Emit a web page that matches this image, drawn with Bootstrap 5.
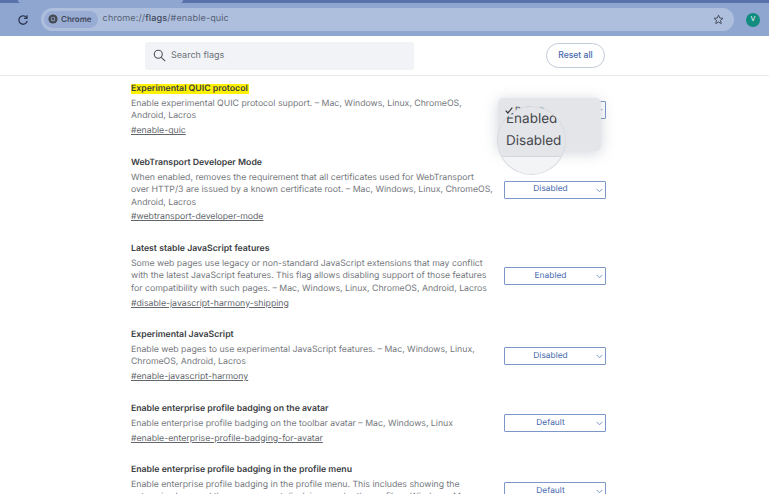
<!DOCTYPE html>
<html lang="en">
<head>
  <meta charset="UTF-8" />
  <meta name="viewport" content="width=device-width, initial-scale=1.0"/>
  <title>chrome://flags</title>
  <link href="https://cdn.jsdelivr.net/npm/bootstrap@5.3.3/dist/css/bootstrap.min.css" rel="stylesheet">
  <style>
    html, body { height: 100%; overflow: hidden; }
    body { background: #fff; font-family: Inter, "Liberation Sans", sans-serif; color: #75787d; position: relative; text-rendering: geometricPrecision; }

    .tab-strip { height: 3px; background: #5873ab; }
    .tab-active { width: 165px; margin-left: 18px; height: 3px; background: #8fa6d1; border-radius: 0 0 4px 4px; }
    .tool-bar { height: 33px; background: #8fa6d1; padding-left: 17px; }
    .reload-ico { width: 12px; height: 12px; margin-right: 12px; flex: none; }
    .omni-box { width: 693px; height: 23px; margin-top: -1px; background: #aebfde; border-radius: 12px; padding: 0 10px 0 3px; }
    .site-chip { height: 17px; padding: 0 6px 0 4px; background: #99add4; border-radius: 9px; font-size: 8px; font-weight: 600; color: #3f4759; gap: 3px; }
    .omni-url { font-size: 9.1px; color: #565f74; margin-left: 5px; letter-spacing: .1px; }
    .omni-url b { font-weight: 500; color: #3f4759; }
    .avatar-dot { width: 14px; height: 14px; border-radius: 50%; background: #128c7e; color: #fff; font-size: 7px; margin-left: 12px; }

    .flags-head { height: 40px; border-bottom: 1px solid #e9eaee; padding-left: 145px; padding-right: 164px; }
    .search-box { width: 269px; height: 28px; background: #f1f3f7; border-radius: 2px; padding-left: 8px; gap: 5px; font-size: 9px; color: #6a6e74; }
    .reset-btn { width: 59px; height: 25px; border: 1px solid #c3cad8; border-radius: 13px; background: #fff; color: #4668ae; font-size: 8.6px; font-weight: 500; padding: 0; }

    .flag-list { padding: 6px 164px 0 131px; }
    .flag-row { padding-bottom: 18px; gap: 10.5px; }
    .flag-text { width: 362.5px; flex: none; font-size: 8.72px; line-height: 12.4px; }
    .flag-title { font-weight: 600; color: #3a3d42; line-height: 15px; height: 16px; }
    .flag-title mark { background: #fff200; color: #3a3d42; padding: 0 1px 0 0; }
    .flag-desc { margin: 0; }
    .flag-link { display: block; color: #63666b; margin-top: 2.5px; }
    .flag-pick { width: 102px; height: 18px; flex: none; border: 1px solid #7d97c9; border-radius: 1px; background: #fff; color: #4668ae; font-size: 8.4px; padding-right: 9px; position: relative; }
    .pick-caret { position: absolute; right: 2px; top: 6px; }

    .pop-menu { position: absolute; left: 498px; top: 98px; width: 103px; height: 53px; background: #e4e5e9; border-radius: 5px; box-shadow: 0 2px 14px rgba(90, 100, 125, .28); font-size: 8.5px; color: #44474c; }
    .pop-check { position: absolute; left: 7px; top: 9px; }
    .pop-default { position: absolute; left: 17px; top: 8px; line-height: 10px; }
    .loupe { position: absolute; left: 498px; top: 107px; width: 67px; height: 67px; border-radius: 50%; background: #e4e5e9; overflow: hidden; box-shadow: 0 0 0 1px #d9dbe0; color: #44474c; font-size: 13.5px; line-height: 16px; text-align: center; }
    .loupe-one { position: absolute; left: 8px; top: 4px; }
    .loupe-two { position: absolute; left: 8px; top: 26px; }
    .loupe-foot { position: absolute; left: 0; right: 0; top: 49px; bottom: 0; background: #f3f4f6; border-top: 1px solid #d4d6db; }
  </style>
</head>
<body>

<div class="tab-strip"><div class="tab-active"></div></div>
<div class="tool-bar d-flex align-items-center">
  <svg class="reload-ico" viewBox="0 0 12 12" fill="none" stroke="#2f3a52" stroke-width="1.3"><path d="M9.8 4A4.2 4.2 0 1 0 10.2 7"/><path d="M10 1.3V4.3H7" /></svg>
  <div class="omni-box d-flex align-items-center">
    <span class="site-chip d-flex align-items-center">
      <svg width="10" height="10" viewBox="0 0 10 10"><circle cx="5" cy="5" r="4.6" fill="#454a55"/><circle cx="5" cy="5" r="2.2" fill="#99add4"/><circle cx="5" cy="5" r="1.4" fill="#454a55"/></svg>
      Chrome
    </span>
    <span class="omni-url">chrome://<b>flags</b>/#enable-quic</span>
    <svg class="ms-auto" width="11" height="11" viewBox="0 0 12 12" fill="none" stroke="#3f4656"><path d="M6 1.2 7.4 4.4 10.9 4.7 8.2 7 9 10.5 6 8.7 3 10.5 3.8 7 1.1 4.7 4.6 4.4Z"/></svg>
  </div>
  <span class="avatar-dot d-flex align-items-center justify-content-center">V</span>
</div>

<div class="flags-head d-flex align-items-center justify-content-between">
  <div class="search-box d-flex align-items-center">
    <svg width="13" height="13" viewBox="0 0 13 13" fill="none" stroke="#50545a" stroke-width="1.1"><circle cx="5.3" cy="5.3" r="4"/><path d="M8.3 8.3 12.2 12.2"/></svg>
    Search flags
  </div>
  <button class="reset-btn" type="button">Reset all</button>
</div>

<div class="flag-list" id="flagList"></div>

<div class="pop-menu">
  <svg class="pop-check" width="8" height="7" viewBox="0 0 8 7" fill="none" stroke="#33363b" stroke-width="1.2"><path d="M.7 3.6 2.9 6 7.3 .7"/></svg>
  <span class="pop-default">Default</span>
</div>
<div class="loupe">
  <span class="loupe-one">Enabled</span>
  <span class="loupe-two">Disabled</span>
  <div class="loupe-foot"></div>
</div>

<script>
  const flags = [
    { title: '<mark>Experimental QUIC protocol</mark>', desc: 'Enable experimental QUIC protocol support. – Mac, Windows, Linux, ChromeOS, Android, Lacros', link: '#enable-quic', val: 'Default' },
    { title: 'WebTransport Developer Mode', desc: 'When enabled, removes the requirement that all certificates used for WebTransport over HTTP/3 are issued by a known certificate root. – Mac, Windows, Linux, ChromeOS, Android, Lacros', link: '#webtransport-developer-mode', val: 'Disabled' },
    { title: 'Latest stable JavaScript features', desc: 'Some web pages use legacy or non-standard JavaScript extensions that may conflict with the latest JavaScript features. This flag allows disabling support of those features for compatibility with such pages. – Mac, Windows, Linux, ChromeOS, Android, Lacros', link: '#disable-javascript-harmony-shipping', val: 'Enabled' },
    { title: 'Experimental JavaScript', desc: 'Enable web pages to use experimental JavaScript features. – Mac, Windows, Linux, ChromeOS, Android, Lacros', link: '#enable-javascript-harmony', val: 'Disabled' },
    { title: 'Enable enterprise profile badging on the avatar', desc: 'Enable enterprise profile badging on the toolbar avatar – Mac, Windows, Linux', link: '#enable-enterprise-profile-badging-for-avatar', val: 'Default' },
    { title: 'Enable enterprise profile badging in the profile menu', desc: 'Enable enterprise profile badging in the profile menu. This includes showing the enterprise logo and the management disclaimer under the profile. – Windows, Mac', link: '#enable-enterprise-profile-badging', val: 'Default' }
  ];

  document.getElementById('flagList').innerHTML = flags.map(f => `
    <div class="flag-row d-flex align-items-center">
      <div class="flag-text">
        <div class="flag-title">${f.title}</div>
        <p class="flag-desc">${f.desc}</p>
        <a class="flag-link" href="${f.link}">${f.link}</a>
      </div>
      <div class="flag-pick d-flex align-items-center justify-content-center">
        ${f.val}
        <svg class="pick-caret" width="7" height="5" viewBox="0 0 7 5" fill="none" stroke="#7d97c9"><path d="M.8 1 3.5 3.8 6.2 1"/></svg>
      </div>
    </div>`).join('');
</script>

<script src="https://cdn.jsdelivr.net/npm/bootstrap@5.3.3/dist/js/bootstrap.bundle.min.js"></script>
</body>
</html>
